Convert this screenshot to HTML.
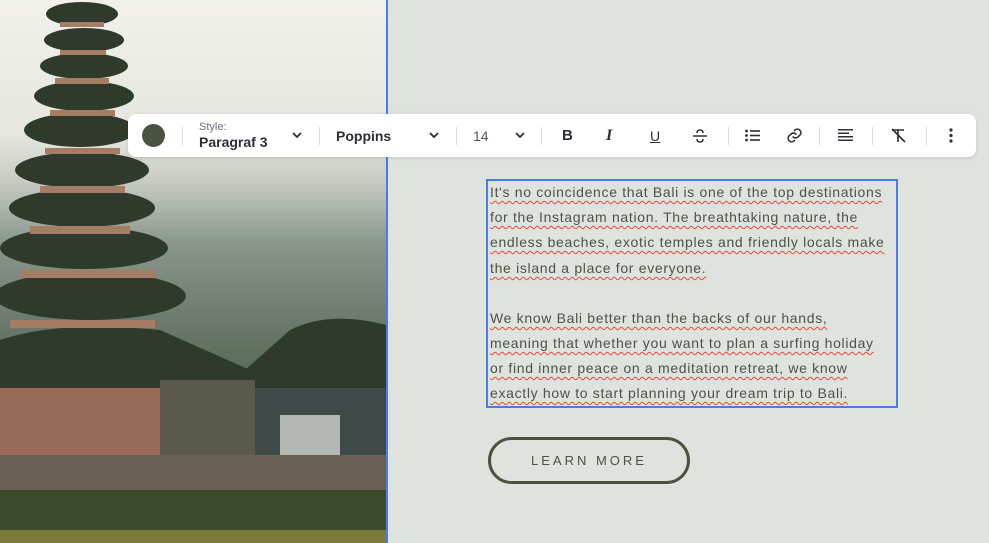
<!DOCTYPE html>
<html><head><meta charset="utf-8"><style>
*{margin:0;padding:0;box-sizing:border-box}
body{width:989px;height:543px;overflow:hidden;background:#dfe3de;font-family:"Liberation Sans",sans-serif;position:relative}
#img{position:absolute;left:0;top:0;width:386px;height:543px}
#vline{position:absolute;left:386px;top:0;width:2px;height:543px;background:#4a7bea}
#tb{position:absolute;left:128px;top:114px;width:848px;height:43px;background:#fff;border-radius:8px;box-shadow:0 1px 4px rgba(0,0,0,.12)}
#tb .it{position:absolute;top:0;height:43px;display:flex;align-items:center;color:#2c2f36;font-size:14px}
.sep{position:absolute;top:13px;width:1px;height:18px;background:#dcdcdc}
.chev{position:absolute;top:15px}
#txt{position:absolute;left:486px;top:179px;width:412px;height:229px;border:2px solid #4a7bea}
.ln{position:absolute;left:2px;white-space:nowrap;font-size:14px;letter-spacing:.68px;color:#4d5246;text-decoration:underline wavy #e5483d;text-decoration-thickness:1px;text-underline-offset:3px}
#btn{position:absolute;left:488px;top:437px;width:202px;height:47px;border:3px solid #4a5240;border-radius:24px;text-align:center;line-height:41px;font-size:13px;letter-spacing:3px;color:#4a5240}
</style></head><body>
<svg id="img" viewBox="0 0 386 543" preserveAspectRatio="none">
<defs>
<linearGradient id="sky" x1="0" y1="0" x2="0" y2="1">
<stop offset="0" stop-color="#f1f1ea"/><stop offset=".25" stop-color="#e4e6df"/><stop offset=".33" stop-color="#c9cdc5"/><stop offset=".45" stop-color="#8a968b"/><stop offset=".65" stop-color="#5f6f60"/><stop offset="1" stop-color="#4d5a49"/>
</linearGradient>
</defs>
<rect width="386" height="543" fill="url(#sky)"/>
<g fill="#2f3a2c">
<ellipse cx="82" cy="14" rx="36" ry="12"/>
<ellipse cx="84" cy="40" rx="40" ry="12"/>
<ellipse cx="84" cy="66" rx="44" ry="13"/>
<ellipse cx="84" cy="96" rx="50" ry="15"/>
<ellipse cx="80" cy="130" rx="56" ry="17"/>
<ellipse cx="82" cy="170" rx="67" ry="18"/>
<ellipse cx="82" cy="208" rx="73" ry="19"/>
<ellipse cx="84" cy="248" rx="84" ry="21"/>
<ellipse cx="90" cy="296" rx="96" ry="24"/>
<path d="M0 340 Q60 320 160 330 L250 370 L250 388 L0 388Z"/>
<path d="M245 370 L290 330 Q330 310 386 325 L386 388 L245 388Z"/>
</g>
<g fill="#a57c66">
<rect x="60" y="22" width="44" height="5"/><rect x="60" y="50" width="46" height="5"/><rect x="55" y="78" width="54" height="6"/><rect x="50" y="110" width="65" height="6"/><rect x="45" y="148" width="75" height="6"/><rect x="40" y="186" width="85" height="7"/><rect x="30" y="226" width="100" height="8"/><rect x="20" y="270" width="135" height="8"/><rect x="10" y="320" width="145" height="8"/>
</g>
<rect x="0" y="388" width="170" height="80" fill="#9a6a58"/>
<rect x="160" y="380" width="95" height="110" fill="#5a5a4c"/>
<rect x="255" y="388" width="131" height="75" fill="#3e4a48"/>
<rect x="280" y="415" width="60" height="45" fill="#b5b9b3"/>
<rect x="0" y="455" width="386" height="40" fill="#6b6054"/>
<rect x="0" y="490" width="386" height="53" fill="#3c4a2c"/>
<rect x="0" y="530" width="386" height="13" fill="#7a7a3a"/>
</svg>
<div id="vline"></div>

<div id="tb">
<div style="position:absolute;left:14px;top:10px;width:23px;height:23px;border-radius:50%;background:#4a5240"></div>
<div class="sep" style="left:54px"></div>
<div style="position:absolute;left:71px;top:7px;font-size:11px;color:#6b6e78">Style:</div>
<div style="position:absolute;left:71px;top:20px;font-size:14px;font-weight:bold;color:#2c2f36">Paragraf 3</div>
<svg class="chev" style="left:163px" width="12" height="12" viewBox="0 0 12 12"><path d="M2 4l4 4 4-4" fill="none" stroke="#2c2f36" stroke-width="1.8"/></svg>
<div class="sep" style="left:191px"></div>
<div class="it" style="left:208px;font-weight:bold">Poppins</div>
<svg class="chev" style="left:300px" width="12" height="12" viewBox="0 0 12 12"><path d="M2 4l4 4 4-4" fill="none" stroke="#2c2f36" stroke-width="1.8"/></svg>
<div class="sep" style="left:328px"></div>
<div class="it" style="left:345px;color:#555">14</div>
<svg class="chev" style="left:386px" width="12" height="12" viewBox="0 0 12 12"><path d="M2 4l4 4 4-4" fill="none" stroke="#2c2f36" stroke-width="1.8"/></svg>
<div class="sep" style="left:413px"></div>
<div class="it" style="left:434px;font-weight:bold;font-size:15px">B</div>
<div class="it" style="left:478px;font-style:italic;font-family:'Liberation Serif',serif;font-weight:bold;font-size:16px">I</div>
<div class="it" style="left:522px;text-decoration:underline;font-size:14px">U</div>
<svg style="position:absolute;left:565px;top:14px" width="14" height="16" viewBox="0 0 14 16"><path d="M0 8h14M4 5q0-3 3-3t3 3M4 11q0 3 3 3t3-3" fill="none" stroke="#2c2f36" stroke-width="1.5"/></svg>
<div class="sep" style="left:600px"></div>
<svg style="position:absolute;left:617px;top:15px" width="15" height="13" viewBox="0 0 15 13"><g fill="#2c2f36"><circle cx="1.5" cy="2" r="1.4"/><circle cx="1.5" cy="6.5" r="1.4"/><circle cx="1.5" cy="11" r="1.4"/><rect x="5" y="1.2" width="10" height="1.6"/><rect x="5" y="5.7" width="10" height="1.6"/><rect x="5" y="10.2" width="10" height="1.6"/></g></svg>
<svg style="position:absolute;left:658px;top:13px" width="17" height="17" viewBox="0 0 24 24"><path d="M10 14a5 5 0 0 0 7 0l3-3a5 5 0 0 0-7-7l-1 1M14 10a5 5 0 0 0-7 0l-3 3a5 5 0 0 0 7 7l1-1" fill="none" stroke="#2c2f36" stroke-width="2.2" stroke-linecap="round"/></svg>
<div class="sep" style="left:691px"></div>
<svg style="position:absolute;left:710px;top:14px" width="15" height="15" viewBox="0 0 15 15"><g fill="#2c2f36"><rect y="1" width="15" height="1.5"/><rect y="4.5" width="11" height="1.5"/><rect y="8" width="15" height="1.5"/><rect y="11.5" width="15" height="1.5"/></g></svg>
<div class="sep" style="left:744px"></div>
<svg style="position:absolute;left:763px;top:14px" width="15" height="15" viewBox="0 0 15 15"><path d="M1 2h12M7 2v12M1 1l13 13" fill="none" stroke="#2c2f36" stroke-width="1.6"/></svg>
<div class="sep" style="left:798px"></div>
<svg style="position:absolute;left:821px;top:14px" width="4" height="15" viewBox="0 0 4 15"><g fill="#2c2f36"><circle cx="2" cy="2" r="1.6"/><circle cx="2" cy="7.5" r="1.6"/><circle cx="2" cy="13" r="1.6"/></g></svg>
</div>

<div id="txt">
<div class="ln" style="top:3px">It's no coincidence that Bali is one of the top destinations</div>
<div class="ln" style="top:28px">for the Instagram nation. The breathtaking nature, the</div>
<div class="ln" style="top:53px">endless beaches, exotic temples and friendly locals make</div>
<div class="ln" style="top:79px">the island a place for everyone.</div>
<div class="ln" style="top:129px">We know Bali better than the backs of our hands,</div>
<div class="ln" style="top:154px">meaning that whether you want to plan a surfing holiday</div>
<div class="ln" style="top:179px">or find inner peace on a meditation retreat, we know</div>
<div class="ln" style="top:204px">exactly how to start planning your dream trip to Bali.</div>
</div>
<div id="btn">LEARN MORE</div>
</body></html>
